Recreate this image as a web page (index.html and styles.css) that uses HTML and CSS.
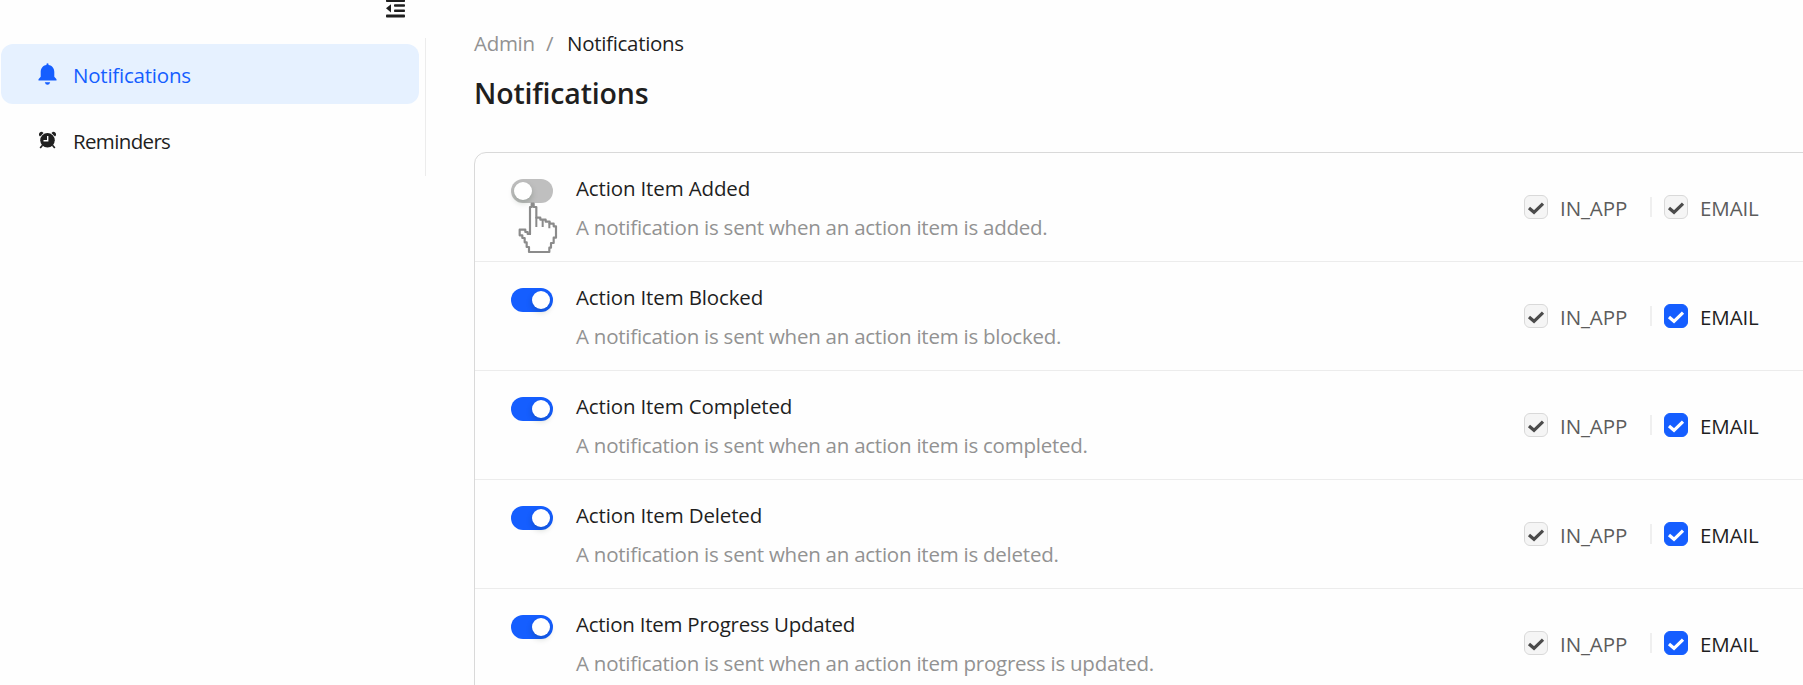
FILE: index.html
```html
<!DOCTYPE html>
<html lang="en">
<head>
<meta charset="utf-8">
<title>Notifications</title>
<link rel="stylesheet" href="styles.css">
</head>
<body>
<svg class="defs" width="0" height="0" aria-hidden="true">
  <symbol id="check" viewBox="0 0 24 24"><path d="M5 13 10 17.3 19 8.6" fill="none" stroke="currentColor" stroke-width="3.2"/></symbol>
</svg>
<div class="app">
  <aside class="sidebar">
    <div class="collapse">
      <svg width="19" height="19" viewBox="0 0 19 19" fill="currentColor"><rect y="0" width="19" height="3" rx=".8"/><rect x="8" y="5.2" width="11" height="2.6" rx=".8"/><rect x="8" y="10.4" width="11" height="2.6" rx=".8"/><rect y="15.6" width="19" height="3" rx=".8"/><path d="M0 9.3 5 5.2V13.4Z"/></svg>
    </div>
    <nav class="menu">
      <a class="item active">
        <svg class="icon" width="19" height="22" viewBox="0 0 19 22" fill="currentColor"><path d="M8.5 2V.7Q9.5-.3 10.5.7V2C14.4 2.500 16.300 5.500 16.300 9V13.800L18.300 16Q19 17.500 18 17.500H1Q0 17.500.7 16L2.700 13.800V9C2.700 5.500 4.600 2.500 8.500 2ZM6.800 19.200H12.200Q11.500 21.800 9.500 21.800T6.800 19.200Z"/></svg>
        <span class="label">Notifications</span>
      </a>
      <a class="item">
        <svg class="icon" width="19" height="18" viewBox="0 0 19 18"><g fill="currentColor"><circle cx="9.500" cy="9.300" r="7.300"/><path d="M1 4.300Q.6 1 4 .8L5.600 1.900 2 5.600ZM18 4.300Q18.400 1 15 .8L13.400 1.900 17 5.600Z"/></g><path d="M4.500 14.300 2.200 17M14.500 14.300 16.800 17" stroke="currentColor" stroke-width="1.700"/><path d="M9.700 5V9.800H5.500" fill="none" stroke="#fefefe" stroke-width="1.400"/></svg>
        <span class="label tight">Reminders</span>
      </a>
    </nav>
  </aside>
  <main class="main">
    <div class="crumbs"><span class="muted c-admin">Admin</span><span class="muted sep">/</span><span>Notifications</span></div>
    <h1 class="title">Notifications</h1>
    <section class="card">
      <div class="row">
        <div class="switch off"><i class="knob"></i>
          <svg class="cursor" width="42" height="52" viewBox="170 185 126 156"><path d="M209 262V200H214V190H220V200H228V232H240V238H256V244H268V250H280V258H287V292H280V308H272V322H267V335H206V320H199V306H193V293H186V285H178V268H195V275H202V281H209Z" fill="#fff" stroke="#8b8b8b" stroke-width="6.5" stroke-linejoin="round"/><path d="M209 260V284M228 230V260M247 238V260M267 248V264" stroke="#8b8b8b" stroke-width="6"/></svg>
        </div>
        <div class="text"><div class="name">Action Item Added</div><div class="desc">A notification is sent when an action item is added.</div></div>
        <div class="channels"><i class="box"><svg><use href="#check"/></svg></i><span class="ch inapp">IN_APP</span><i class="bar"></i><i class="box"><svg><use href="#check"/></svg></i><span class="ch">EMAIL</span></div>
      </div>
      <div class="row">
        <div class="switch"><i class="knob"></i></div>
        <div class="text"><div class="name">Action Item Blocked</div><div class="desc">A notification is sent when an action item is blocked.</div></div>
        <div class="channels"><i class="box"><svg><use href="#check"/></svg></i><span class="ch inapp">IN_APP</span><i class="bar"></i><i class="box on"><svg><use href="#check"/></svg></i><span class="ch live">EMAIL</span></div>
      </div>
      <div class="row">
        <div class="switch"><i class="knob"></i></div>
        <div class="text"><div class="name">Action Item Completed</div><div class="desc">A notification is sent when an action item is completed.</div></div>
        <div class="channels"><i class="box"><svg><use href="#check"/></svg></i><span class="ch inapp">IN_APP</span><i class="bar"></i><i class="box on"><svg><use href="#check"/></svg></i><span class="ch live">EMAIL</span></div>
      </div>
      <div class="row">
        <div class="switch"><i class="knob"></i></div>
        <div class="text"><div class="name">Action Item Deleted</div><div class="desc">A notification is sent when an action item is deleted.</div></div>
        <div class="channels"><i class="box"><svg><use href="#check"/></svg></i><span class="ch inapp">IN_APP</span><i class="bar"></i><i class="box on"><svg><use href="#check"/></svg></i><span class="ch live">EMAIL</span></div>
      </div>
      <div class="row">
        <div class="switch"><i class="knob"></i></div>
        <div class="text"><div class="name long">Action Item Progress Updated</div><div class="desc">A notification is sent when an action item progress is updated.</div></div>
        <div class="channels"><i class="box"><svg><use href="#check"/></svg></i><span class="ch inapp">IN_APP</span><i class="bar"></i><i class="box on"><svg><use href="#check"/></svg></i><span class="ch live">EMAIL</span></div>
      </div>
    </section>
  </main>
</div>
</body>
</html>
```
FILE: styles.css
```css
* { box-sizing: border-box; }
body { margin: 0; background: #fefefe; color: #1f1f1f; font-family: "Segoe UI", "Open Sans", sans-serif; font-size: 20.5px; overflow: hidden; }
.defs { display: block; height: 0; }
.app { display: flex; height: 685px; overflow: hidden; }
.sidebar { width: 426px; flex: none; }
.collapse { height: 38px; padding-left: 386px; display: flex; align-items: flex-start; }
.collapse svg { display: block; margin-top: -1px; }
.menu { height: 138px; padding: 6px 6px 0 1px; border-right: 1px solid #ececec; display: flex; flex-direction: column; gap: 6px; }
.item { height: 60px; border-radius: 12px; display: flex; align-items: center; padding-left: 37px; gap: 16px; line-height: 60px; }
.item.active { background: #e6f1ff; color: #155eff; }
.icon { flex: none; }
.label { padding-top: 2px; letter-spacing: -0.22px; white-space: nowrap; }
.label.tight { letter-spacing: -0.65px; }
.main { flex: none; width: 1377px; padding-left: 48px; }
.crumbs { height: 60px; padding-top: 27px; line-height: 32px; display: flex; letter-spacing: -0.3px; white-space: nowrap; }
.muted, .desc { color: #929292; }
.c-admin { width: 72px; }
.sep { width: 21px; }
.title { margin: 0; height: 92px; padding-top: 13px; font-size: 28.5px; line-height: 40px; font-weight: 600; letter-spacing: -0.15px; }
.card { width: 1400px; height: 560px; border: 1px solid #d9d9d9; border-radius: 12px; }
.row { height: 109px; border-bottom: 1px solid #ececec; display: flex; padding-left: 36px; }
.switch { position: relative; flex: none; width: 42px; height: 24px; margin-top: 26px; border-radius: 12px; background: #155eff; padding: 3px; display: flex; justify-content: flex-end; }
.switch.off { background: #bfbfbf; justify-content: flex-start; }
.knob { width: 18px; height: 18px; border-radius: 50%; background: #fff; box-shadow: 0 3px 6px rgba(0, 35, 11, .2); }
.cursor { position: absolute; left: 6px; top: 23px; }
.text { width: 971px; flex: none; padding: 16px 0 0 23px; line-height: 39px; white-space: nowrap; }
.name { letter-spacing: -0.14px; }
.name.long { letter-spacing: -0.25px; }
.desc { letter-spacing: -0.24px; }
.channels { display: flex; align-items: center; height: 108px; }
.box { width: 24px; height: 24px; flex: none; border: 1px solid #d9d9d9; border-radius: 6px; background: #f5f5f5; color: #4b4b4b; }
.box svg { display: block; width: 24px; height: 24px; margin: -1px; }
.box.on { background: #155eff; border-color: #155eff; color: #fff; }
.ch { color: #5c5c5c; padding: 2px 0 0 12px; letter-spacing: -0.1px; }
.ch.live { color: #1f1f1f; }
.inapp { width: 102px; }
.bar { width: 2px; height: 20px; background: #efefef; margin-right: 12px; }
```
